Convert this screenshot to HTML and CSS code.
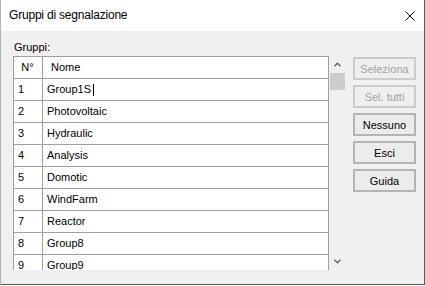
FILE: index.html
```html
<!DOCTYPE html>
<html lang="it">
<head>
  <meta charset="UTF-8" />
  <title>Gruppi di segnalazione</title>
  <link rel="stylesheet" href="styles.css">
</head>
<body>

<div class="window">
  <!-- Title bar -->
  <div class="titlebar">
    <span class="title">Gruppi di segnalazione</span>
    <svg class="close" width="10" height="10" viewBox="0 0 10 10">
      <path d="M0.5 0.5 L9.5 9.5 M9.5 0.5 L0.5 9.5" stroke="#000" stroke-width="1" fill="none"/>
    </svg>
  </div>

  <div class="content">
    <div class="left">
      <div class="label">Gruppi:</div>
      <div class="grid-wrap">
        <div class="grid">
          <div class="row head">
            <div class="num">N°</div>
            <div class="name">Nome</div>
          </div>
          <div class="row">
            <div class="num">1</div>
            <div class="name">Group1S<span class="caret"></span></div>
          </div>
          <div class="row"><div class="num">2</div><div class="name">Photovoltaic</div></div>
          <div class="row"><div class="num">3</div><div class="name">Hydraulic</div></div>
          <div class="row"><div class="num">4</div><div class="name">Analysis</div></div>
          <div class="row"><div class="num">5</div><div class="name">Domotic</div></div>
          <div class="row"><div class="num">6</div><div class="name">WindFarm</div></div>
          <div class="row"><div class="num">7</div><div class="name">Reactor</div></div>
          <div class="row"><div class="num">8</div><div class="name">Group8</div></div>
          <div class="row"><div class="num">9</div><div class="name">Group9</div></div>
        </div>

        <!-- Scrollbar -->
        <div class="scrollbar">
          <div class="arrow">
            <svg width="7" height="5" viewBox="0 0 7 5">
              <path d="M0.5 4.2 L3.5 1.2 L6.5 4.2" stroke="#606060" stroke-width="1.4" fill="none"/>
            </svg>
          </div>
          <div class="thumb"></div>
          <div class="track"></div>
          <div class="arrow">
            <svg width="7" height="5" viewBox="0 0 7 5">
              <path d="M0.5 0.8 L3.5 3.8 L6.5 0.8" stroke="#606060" stroke-width="1.4" fill="none"/>
            </svg>
          </div>
        </div>
      </div>
    </div>

    <div class="buttons">
      <button class="btn" disabled>Seleziona</button>
      <button class="btn" disabled>Sel. tutti</button>
      <button class="btn">Nessuno</button>
      <button class="btn">Esci</button>
      <button class="btn">Guida</button>
    </div>
  </div>
</div>

</body>
</html>
```

FILE: styles.css
```css
body {
  margin: 0;
  background: white;
  font-family: 'Liberation Sans', Arial, sans-serif;
  font-size: 11px;
  color: #000;
}

.window {
  box-sizing: border-box;
  width: 425px;
  height: 285px;
  border-left: 1px solid #b4b4b4;
  border-right: 1px solid #5a5a5a;
  border-bottom: 1px solid #5a5a5a;
  display: flex;
  flex-direction: column;
  background: #f0f0f0;
}

/* Title bar */
.titlebar {
  height: 31px;
  flex-shrink: 0;
  background: white;
  display: flex;
  align-items: center;
  justify-content: space-between;
  padding: 0 9px 0 8px;
}

.title {
  font-size: 12px;
  letter-spacing: -0.2px;
  margin-top: -1px;
}

/* Content */
.content {
  flex: 1;
  display: flex;
  padding: 10px 0 0 12px;
}

.left {
  width: 333px;
}

.label {
  line-height: 13px;
  height: 13px;
  margin-left: 1px;
}

.grid-wrap {
  margin-top: 2px;
  height: 214px;
  display: flex;
}

.grid {
  width: 316px;
  box-sizing: border-box;
  height: 214px;
  overflow: hidden;
  background: white;
  border: 1px solid #a0a0a0;
  border-bottom: none;
}

.row {
  display: flex;
  height: 21px;
  border-bottom: 1px solid #a0a0a0;
  line-height: 21px;
}

.num {
  width: 29px;
  border-right: 1px solid #a0a0a0;
  padding-left: 4px;
  box-sizing: border-box;
  flex-shrink: 0;
}

.name {
  padding-left: 4px;
  display: flex;
  align-items: center;
}

.head .num {
  padding-left: 0;
  text-align: center;
  text-indent: -1px;
}

.head .name {
  padding-left: 8px;
}

.caret {
  display: inline-block;
  width: 1px;
  height: 12px;
  background: #000;
  margin-left: 2px;
}

/* Scrollbar */
.scrollbar {
  width: 17px;
  display: flex;
  flex-direction: column;
  background: #f0f0f0;
}

.arrow {
  height: 17px;
  display: flex;
  align-items: center;
  justify-content: center;
  flex-shrink: 0;
}

.thumb {
  height: 17px;
  margin: 0 1px;
  background: #cdcdcd;
  flex-shrink: 0;
}

.track {
  flex: 1;
}

/* Buttons */
.buttons {
  margin-left: 7px;
  margin-top: 16px;
  display: flex;
  flex-direction: column;
  gap: 5px;
}

.btn {
  width: 63px;
  height: 23px;
  box-sizing: border-box;
  border: 2px solid #b4b4b4;
  background: #ececec;
  font-family: 'Liberation Sans', Arial, sans-serif;
  font-size: 11px;
  color: #000;
  padding: 0;
  border-radius: 0;
}

.btn:disabled {
  border-color: #cccccc;
  background: #efefef;
  color: #a3a3a3;
}
```
